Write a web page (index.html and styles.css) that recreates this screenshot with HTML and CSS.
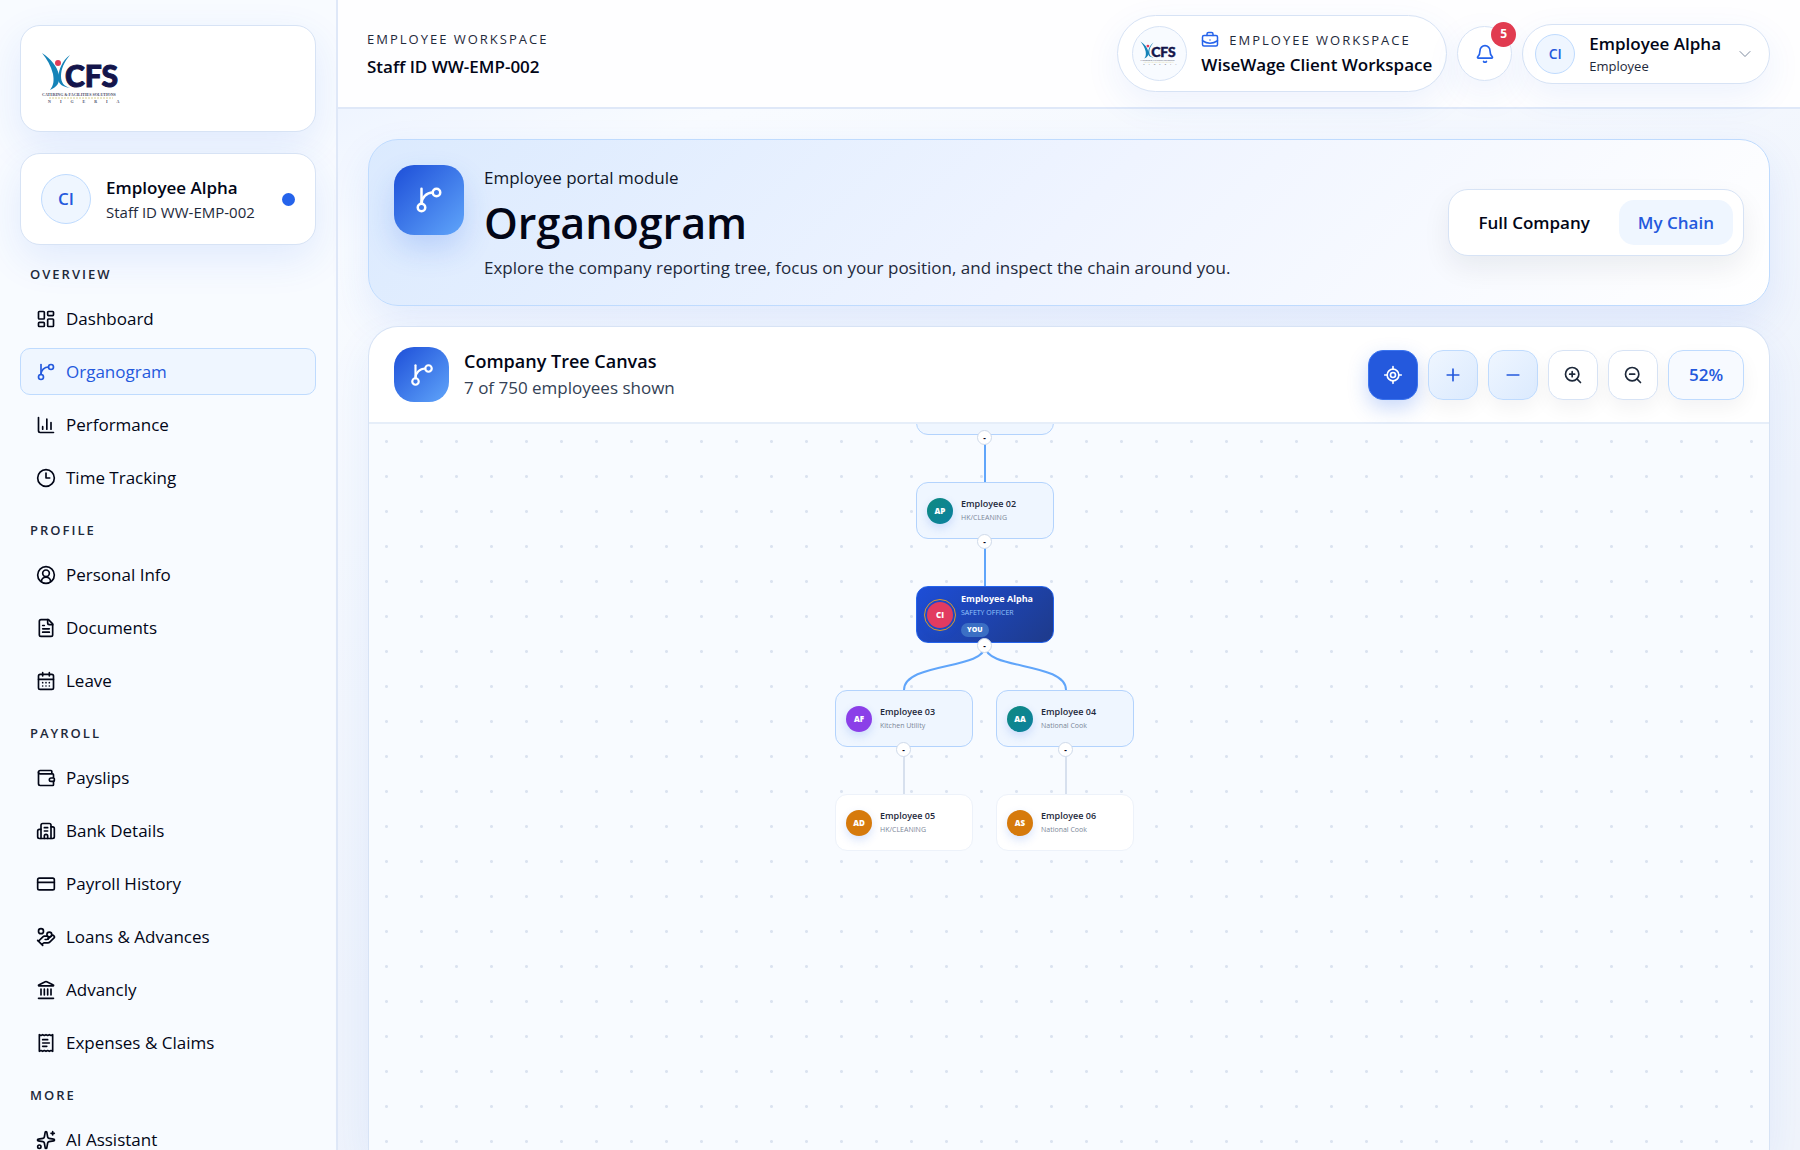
FILE: index.html
```
<!DOCTYPE html>
<html lang="en">
<head>
  <meta charset="UTF-8">
  <meta name="viewport" content="width=device-width, initial-scale=1.0">
  <title>Organogram</title>
  <link rel="stylesheet" href="styles.css">
</head>
<body>
  <svg class="sprite" aria-hidden="true">
    <symbol id="branch" viewBox="0 0 24 24"><path d="M6 3v12"/><circle cx="18" cy="6" r="3"/><circle cx="6" cy="18" r="3"/><path d="M15 6a9 9 0 0 0-9 9"/></symbol>
  </svg>

  <div class="app">
    <aside class="sidebar">
      <a class="brand card" href="#" aria-label="CFS home">
        <svg class="logo" viewBox="0 0 84 54">
          <path class="logo-body" d="M1 1C10 7 16 14 18 23C19 31 16 35 9 38C13 33 13 28 12 22C10 14 6 7 1 1Z"/>
          <path class="logo-body" d="M29 3C23 10 20 17 20 24C20 31 23 34 29 36C22 35 17 32 17 26C18 17 21 9 29 3Z"/>
          <circle class="logo-head" cx="17" cy="11" r="3"/>
          <text class="logo-name" x="24" y="35">CFS</text>
          <text class="logo-line" x="1" y="44">CATERING &amp; FACILITIES SOLUTIONS</text>
          <path class="logo-rule" d="M8 46h64"/>
          <text class="logo-line logo-country" x="7" y="51">N I G E R I A</text>
        </svg>
      </a>

      <div class="profile card">
        <span class="avatar">CI</span>
        <div class="profile-text">
          <strong>Employee Alpha</strong>
          <span>Staff ID WW-EMP-002</span>
        </div>
        <i class="status-dot"></i>
      </div>

      <nav class="nav">
        <h2>Overview</h2>
        <ul>
          <li><a href="#"><svg class="icon" viewBox="0 0 24 24"><rect x="3" y="3" width="7" height="9" rx="1"/><rect x="14" y="3" width="7" height="5" rx="1"/><rect x="14" y="12" width="7" height="9" rx="1"/><rect x="3" y="16" width="7" height="5" rx="1"/></svg>Dashboard</a></li>
          <li><a class="active" href="#" aria-current="page"><svg class="icon"><use href="#branch"/></svg>Organogram</a></li>
          <li><a href="#"><svg class="icon" viewBox="0 0 24 24"><path d="M3 3v16a2 2 0 0 0 2 2h16M8 17v-3M13 17V5M18 17V9"/></svg>Performance</a></li>
          <li><a href="#"><svg class="icon" viewBox="0 0 24 24"><circle cx="12" cy="12" r="10"/><path d="M12 6v6h4.500"/></svg>Time Tracking</a></li>
        </ul>
        <h2>Profile</h2>
        <ul>
          <li><a href="#"><svg class="icon" viewBox="0 0 24 24"><circle cx="12" cy="12" r="10"/><circle cx="12" cy="10" r="4"/><path d="M6.500 20a5.500 5.500 0 0 1 11 0"/></svg>Personal Info</a></li>
          <li><a href="#"><svg class="icon" viewBox="0 0 24 24"><path d="M15 2H6a2 2 0 0 0-2 2v16a2 2 0 0 0 2 2h12a2 2 0 0 0 2-2V7z"/><path d="M14 2v4a2 2 0 0 0 2 2h4M10 9H8M16 13H8M16 17H8"/></svg>Documents</a></li>
          <li><a href="#"><svg class="icon" viewBox="0 0 24 24"><rect x="3" y="4" width="18" height="18" rx="2"/><path d="M8 2v4M16 2v4M3 10h18M8 14h.01M12 14h.01M16 14h.01M8 18h.01M12 18h.01M16 18h.01"/></svg>Leave</a></li>
        </ul>
        <h2>Payroll</h2>
        <ul>
          <li><a href="#"><svg class="icon" viewBox="0 0 24 24"><path d="M19 7V4a1 1 0 0 0-1-1H5a2 2 0 0 0 0 4h15a1 1 0 0 1 1 1v4h-3a2 2 0 0 0 0 4h3a1 1 0 0 0 1-1v-2a1 1 0 0 0-1-1"/><path d="M3 5v14a2 2 0 0 0 2 2h15a1 1 0 0 0 1-1v-4"/></svg>Payslips</a></li>
          <li><a href="#"><svg class="icon" viewBox="0 0 24 24"><path d="M10 12h4M10 8h4M14 21v-3a2 2 0 0 0-4 0v3"/><path d="M6 10H4a2 2 0 0 0-2 2v7a2 2 0 0 0 2 2h16a2 2 0 0 0 2-2V9a2 2 0 0 0-2-2h-2"/><path d="M6 21V5a2 2 0 0 1 2-2h8a2 2 0 0 1 2 2v16"/></svg>Bank Details</a></li>
          <li><a href="#"><svg class="icon" viewBox="0 0 24 24"><rect x="2" y="5" width="20" height="14" rx="2"/><path d="M2 10h20"/></svg>Payroll History</a></li>
          <li><a href="#"><svg class="icon" viewBox="0 0 24 24"><path d="M11 15h2a2 2 0 1 0 0-4h-3c-.6 0-1.100.2-1.400.6L3 17"/><path d="m7 21 1.600-1.400c.3-.4.8-.6 1.400-.6h4c1.100 0 2.100-.4 2.800-1.200l4.600-4.400a2 2 0 0 0-2.750-2.910l-4.200 3.900M2 16l6 6"/><circle cx="16" cy="9" r="2.900"/><circle cx="6" cy="5" r="3"/></svg>Loans &amp; Advances</a></li>
          <li><a href="#"><svg class="icon" viewBox="0 0 24 24"><path d="M10 18v-7M14 18v-7M18 18v-7M6 18v-7M3 22h18"/><path d="M11.100 2.200a2 2 0 0 1 1.800 0l7.900 3.850c.5.230.3.950-.2.950H3.500c-.5 0-.7-.7-.2-.950z"/></svg>Advancly</a></li>
          <li><a href="#"><svg class="icon" viewBox="0 0 24 24"><path d="M4 2v20l2-1 2 1 2-1 2 1 2-1 2 1 2-1 2 1V2l-2 1-2-1-2 1-2-1-2 1-2-1-2 1zM8 8h6M8 12h8M8 16h5"/></svg>Expenses &amp; Claims</a></li>
        </ul>
        <h2>More</h2>
        <ul>
          <li><a href="#"><svg class="icon" viewBox="0 0 24 24"><path d="M11 2.800a1 1 0 0 1 2 0l1 5.600a2 2 0 0 0 1.600 1.600l5.600 1a1 1 0 0 1 0 2l-5.600 1a2 2 0 0 0-1.600 1.600l-1 5.600a1 1 0 0 1-2 0l-1-5.600A2 2 0 0 0 8.400 14l-5.600-1a1 1 0 0 1 0-2l5.600-1A2 2 0 0 0 10 8.400z"/><path d="M20 2v4M22 4h-4"/><circle cx="4" cy="20" r="2"/></svg>AI Assistant</a></li>
        </ul>
      </nav>
    </aside>

    <div class="content">
      <header class="topbar">
        <div class="topbar-title">
          <span class="eyebrow">Employee Workspace</span>
          <strong>Staff ID WW-EMP-002</strong>
        </div>
        <div class="workspace pill">
          <span class="workspace-logo">
            <svg class="logo" viewBox="0 0 84 54">
              <path class="logo-body" d="M1 1C10 7 16 14 18 23C19 31 16 35 9 38C13 33 13 28 12 22C10 14 6 7 1 1Z"/>
              <path class="logo-body" d="M29 3C23 10 20 17 20 24C20 31 23 34 29 36C22 35 17 32 17 26C18 17 21 9 29 3Z"/>
              <circle class="logo-head" cx="17" cy="11" r="3"/>
              <text class="logo-name" x="24" y="35">CFS</text>
              <text class="logo-line" x="1" y="44">CATERING &amp; FACILITIES SOLUTIONS</text>
              <path class="logo-rule" d="M8 46h64"/>
              <text class="logo-line logo-country" x="7" y="51">N I G E R I A</text>
            </svg>
          </span>
          <div class="workspace-text">
            <span class="eyebrow"><svg class="icon" viewBox="0 0 24 24"><path d="M12 12h.01M16 6V4a2 2 0 0 0-2-2h-4a2 2 0 0 0-2 2v2M22 13a18.150 18.150 0 0 1-20 0"/><rect x="2" y="6" width="20" height="14" rx="2"/></svg>Employee Workspace</span>
            <strong>WiseWage Client Workspace</strong>
          </div>
        </div>
        <button class="bell" type="button" aria-label="Notifications">
          <svg class="icon" viewBox="0 0 24 24"><path d="M10.300 21a2 2 0 0 0 3.400 0M3.300 15.300A1 1 0 0 0 4 17h16a1 1 0 0 0 .7-1.700C19.400 14 18 12.500 18 8A6 6 0 0 0 6 8c0 4.500-1.400 6-2.700 7.300"/></svg>
          <span class="badge">5</span>
        </button>
        <button class="user pill" type="button">
          <span class="avatar">CI</span>
          <span class="user-text">
            <strong>Employee Alpha</strong>
            <span>Employee</span>
          </span>
          <svg class="icon" viewBox="0 0 24 24"><path d="m6 9 6 6 6-6"/></svg>
        </button>
      </header>

      <main>
        <section class="hero">
          <span class="tile"><svg class="icon"><use href="#branch"/></svg></span>
          <div class="hero-text">
            <p class="module">Employee portal module</p>
            <h1>Organogram</h1>
            <p>Explore the company reporting tree, focus on your position, and inspect the chain around you.</p>
          </div>
          <div class="switch">
            <button type="button">Full Company</button>
            <button class="on" type="button">My Chain</button>
          </div>
        </section>

        <section class="panel">
          <header class="panel-head">
            <span class="tile"><svg class="icon"><use href="#branch"/></svg></span>
            <div class="panel-title">
              <h2>Company Tree Canvas</h2>
              <p>7 of 750 employees shown</p>
            </div>
            <div class="tools">
              <button class="primary" type="button" aria-label="Center on me"><svg class="icon" viewBox="0 0 24 24"><path d="M2 12h3M19 12h3M12 2v3M12 19v3"/><circle cx="12" cy="12" r="7"/><circle cx="12" cy="12" r="3"/></svg></button>
              <button class="soft" type="button" aria-label="Expand all"><svg class="icon" viewBox="0 0 24 24"><path d="M5 12h14M12 5v14"/></svg></button>
              <button class="soft" type="button" aria-label="Collapse all"><svg class="icon" viewBox="0 0 24 24"><path d="M5 12h14"/></svg></button>
              <button type="button" aria-label="Zoom in"><svg class="icon" viewBox="0 0 24 24"><circle cx="11" cy="11" r="8"/><path d="m21 21-4.300-4.300M11 8v6M8 11h6"/></svg></button>
              <button type="button" aria-label="Zoom out"><svg class="icon" viewBox="0 0 24 24"><circle cx="11" cy="11" r="8"/><path d="m21 21-4.300-4.300M8 11h6"/></svg></button>
              <button class="zoom" type="button">52%</button>
            </div>
          </header>

          <div class="canvas">
            <svg class="links">
              <path d="M616 14v44M616 118v44"/>
              <path d="M616 222C616 246 535 238 535 266M616 222C616 246 697 238 697 266"/>
              <path class="idle" d="M535 326v44M697 326v44"/>
            </svg>
            <div class="node chain n1"></div>
            <div class="node chain n2"><span class="face teal">AP</span><div><b>Employee 02</b><small>HK/CLEANING</small></div></div>
            <div class="node me n3"><span class="face rose">CI</span><div><b>Employee Alpha</b><small>SAFETY OFFICER</small><em>YOU</em></div></div>
            <div class="node chain n4"><span class="face violet">AF</span><div><b>Employee 03</b><small>Kitchen Utility</small></div></div>
            <div class="node chain n5"><span class="face teal">AA</span><div><b>Employee 04</b><small>National Cook</small></div></div>
            <div class="node n6"><span class="face amber">AD</span><div><b>Employee 05</b><small>HK/CLEANING</small></div></div>
            <div class="node n7"><span class="face amber">AS</span><div><b>Employee 06</b><small>National Cook</small></div></div>
            <button class="fold f1" type="button">-</button>
            <button class="fold f2" type="button">-</button>
            <button class="fold f3" type="button">-</button>
            <button class="fold f4" type="button">-</button>
            <button class="fold f5" type="button">-</button>
          </div>
        </section>
      </main>
    </div>
  </div>
</body>
</html>
```
FILE: styles.css
```
* { box-sizing: border-box; }
body { margin: 0; font-family: "Segoe UI", "Open Sans", "Noto Sans", sans-serif; font-size: 17px; line-height: 24px; color: #020617; background: #f8fbff; }
h1, h2, p, ul { margin: 0; padding: 0; }
ul { list-style: none; }
a { color: inherit; text-decoration: none; }
button { font: inherit; color: inherit; cursor: pointer; padding: 0; }
strong { font-weight: 600; }
.sprite { position: absolute; width: 0; height: 0; }
.icon { width: 20px; height: 20px; flex: none; fill: none; stroke: currentColor; stroke-width: 2; stroke-linecap: round; stroke-linejoin: round; }

.app { display: flex; height: 100vh; overflow: hidden; }

/* sidebar */
.sidebar { width: 338px; flex: none; padding: 25px 20px 0; border-right: 2px solid #dfe8f8; background: #f8fbff; overflow: hidden; }
.card { display: flex; align-items: center; border: 1px solid #d7e3f5; border-radius: 20px; background: #fff; box-shadow: 0 14px 40px rgba(37, 99, 235, .11); }
.brand { height: 107px; padding: 0 20px; }
.logo { width: 84px; height: 54px; overflow: visible; }
.logo-body { fill: #1583b8; }
.logo-head { fill: #e23b57; }
.logo-name { font: 900 30px Lato, sans-serif; fill: #14154b; stroke: #14154b; stroke-width: 1; }
.logo-line { font: 700 4px "Liberation Serif", serif; fill: #4a4d68; }
.logo-rule { stroke: #d8cf8a; stroke-width: 1; stroke-dasharray: 2 1; }
.logo-country { word-spacing: 8px; }

.avatar { display: flex; align-items: center; justify-content: center; flex: none; width: 50px; height: 50px; border: 1px solid #bfdbfe; border-radius: 50%; background: #eff6ff; color: #2459dd; font-weight: 600; }
.profile { gap: 15px; height: 92px; margin-top: 21px; padding: 0 20px; }
.profile-text { display: flex; flex-direction: column; flex: 1; padding-top: 2px; }
.profile-text span { font-size: 15px; color: #1e293b; }
.status-dot { width: 13px; height: 13px; border-radius: 50%; background: #2563eb; }

.nav h2 { margin: 19px 0 11px 10px; font-size: 13px; line-height: 20px; font-weight: 600; letter-spacing: 2px; text-transform: uppercase; color: #1e293b; }
.nav ul { display: grid; gap: 6px; }
.nav a { display: flex; align-items: center; gap: 10px; height: 47px; padding: 0 15px; border: 1px solid transparent; border-radius: 10px; }
.nav a.active { border-color: #bfdbfe; background: #eff6ff; color: #2459dd; }

/* top bar */
.content { display: flex; flex-direction: column; flex: 1; min-width: 0; background: linear-gradient(160deg, #e8f0ff, #f8fbff 15%, #eef3fc 60%, #f0f4fb); }
.topbar { display: flex; align-items: center; gap: 10px; height: 109px; flex: none; padding: 0 30px 0 29px; border-bottom: 2px solid #dfe8f8; background: #fefeff; }
.topbar-title { display: flex; flex-direction: column; gap: 4px; margin-right: auto; padding-bottom: 2px; }
.eyebrow { display: flex; align-items: center; gap: 10px; font-size: 13px; font-weight: 500; letter-spacing: 2px; text-transform: uppercase; color: #1e293b; }
.eyebrow .icon { width: 18px; height: 18px; color: #2563eb; }
.pill { display: flex; align-items: center; border: 1px solid #d7e3f5; border-radius: 40px; background: #fff; box-shadow: 0 12px 36px rgba(37, 99, 235, .08); text-align: left; }
.workspace { gap: 14px; height: 77px; padding: 0 14px; }
.workspace-logo { display: flex; align-items: center; justify-content: center; width: 55px; height: 55px; border: 1px solid #d7e3f5; border-radius: 50%; background: #f8fbff; }
.workspace-logo .logo { width: 39px; height: 25px; }
.workspace-text { display: flex; flex-direction: column; gap: 1px; padding-bottom: 2px; }
.bell { position: relative; display: flex; align-items: center; justify-content: center; width: 55px; height: 55px; border: 1px solid #d7e3f5; border-radius: 50%; background: #fff; color: #2563eb; box-shadow: 0 12px 36px rgba(37, 99, 235, .08); }
.badge { position: absolute; top: -5px; right: -5px; width: 25px; height: 25px; border-radius: 50%; background: #e13b50; color: #fff; font-size: 12px; line-height: 24px; font-weight: 700; }
.user { gap: 14px; height: 60px; padding: 0 14px 0 12px; }
.user .avatar { width: 40px; height: 40px; font-size: 14px; }
.user-text { display: flex; flex-direction: column; }
.user-text span { font-size: 13px; line-height: 20px; color: #1e293b; }
.user > .icon { color: #64748b; stroke-width: 1; }

/* page */
main { display: flex; flex-direction: column; gap: 20px; flex: 1; min-height: 0; padding: 30px 30px 0; }
.tile { display: flex; align-items: center; justify-content: center; flex: none; border-radius: 20px; background: linear-gradient(135deg, #1d4ed8, #60a5fa); color: #fff; box-shadow: 0 14px 30px rgba(37, 99, 235, .2); }
.hero { display: flex; align-items: center; gap: 20px; min-height: 167px; flex: none; padding: 25px; border: 1px solid #bfdbfe; border-radius: 30px; background: linear-gradient(135deg, #dbeafe, #eff4ff 50%, #fff); box-shadow: 0 16px 40px rgba(37, 99, 235, .1); }
.hero .tile { width: 70px; height: 70px; align-self: flex-start; }
.hero .tile .icon { width: 30px; height: 30px; }
.hero-text { flex: 1; }
.hero h1 { font-size: 43px; line-height: 66px; font-weight: 600; }
.hero p { color: #1e293b; }
.hero .module { font-weight: 500; color: #0f172a; }
.switch { display: flex; gap: 10px; padding: 10px; border: 1px solid #d7e3f5; border-radius: 20px; background: #fff; box-shadow: 0 12px 28px rgba(15, 23, 42, .07); }
.switch button { height: 45px; padding: 0 19px; border: 0; border-radius: 15px; background: none; font-weight: 600; }
.switch .on { background: #eff6ff; color: #2459dd; }

.panel { display: flex; flex-direction: column; flex: 1; min-height: 0; border: 1px solid #d7e3f5; border-bottom: 0; border-radius: 30px 30px 0 0; background: #fff; overflow: hidden; box-shadow: 0 16px 40px rgba(37, 99, 235, .08); }
.panel-head { display: flex; align-items: center; gap: 15px; height: 97px; flex: none; padding: 0 25px; border-bottom: 2px solid #e6eef9; }
.panel-head .tile { width: 55px; height: 55px; box-shadow: none; }
.panel-head .tile .icon { width: 26px; height: 26px; }
.panel-title { flex: 1; }
.panel-title h2 { font-size: 18px; line-height: 27px; font-weight: 600; }
.panel-title p { line-height: 26px; color: #334155; }
.tools { display: flex; gap: 10px; }
.tools button { display: flex; align-items: center; justify-content: center; width: 50px; height: 50px; border: 1px solid #d7e3f5; border-radius: 15px; background: #fff; color: #1e293b; box-shadow: 0 8px 20px rgba(15, 23, 42, .05); }
.tools .primary { border-color: #3b74ee; background: #2459dd; color: #fff; box-shadow: 0 8px 20px rgba(37, 99, 235, .25); }
.tools .soft { border-color: #bfdbfe; background: linear-gradient(135deg, #eff6ff, #dbeafe); color: #2459dd; }
.tools .zoom { width: 76px; border-color: #bfdbfe; background: #f7faff; color: #2459dd; font-weight: 600; }

/* tree: positions are canvas coordinates */
.canvas { position: relative; flex: 1; overflow: hidden; background: radial-gradient(circle, #dbe3f0 1px, transparent 2px) 0 0 / 35px 35px #f8fbff; }
.links { position: absolute; width: 100%; height: 100%; fill: none; stroke: #60a5fa; stroke-width: 2; }
.links .idle { stroke: #d7e0ee; }
.node { position: absolute; display: flex; align-items: center; gap: 8px; width: 138px; height: 57px; padding: 0 10px; border: 1px solid #edf2fa; border-radius: 12px; background: #fff; }
.node div { display: flex; flex-direction: column; align-items: flex-start; }
.node b { font-size: 9px; line-height: 14px; font-weight: 600; color: #1e293b; }
.node small { font-size: 7px; line-height: 14px; color: #7b8698; }
.chain { border-color: #b3d3fd; background: #eff6ff; }
.me { border-color: #2563eb; background: linear-gradient(135deg, #1d4ed8, #1e3a8a); }
.me b { color: #fff; font-weight: 700; }
.me small { color: #93c5fd; }
.me em { margin-top: 3px; padding: 0 6px; border-radius: 8px; background: #3b6fc4; color: #fff; font-size: 7px; line-height: 14px; font-style: normal; font-weight: 800; }
.face { display: flex; align-items: center; justify-content: center; flex: none; width: 26px; height: 26px; border-radius: 50%; color: #fff; font-size: 8px; font-weight: 800; box-shadow: 0 4px 10px rgba(37, 99, 235, .18); }
.teal { background: linear-gradient(135deg, #0f8a80, #0c80a0); }
.rose { background: #e23b60; outline: 1px solid #d99a2b; outline-offset: 2px; }
.violet { background: #8b3fe8; }
.amber { background: #d67a0c; }
.n1 { left: 547px; top: -46px; }
.n2 { left: 547px; top: 58px; }
.n3 { left: 547px; top: 162px; }
.n4 { left: 466px; top: 266px; }
.n5 { left: 627px; top: 266px; }
.n6 { left: 466px; top: 370px; }
.n7 { left: 627px; top: 370px; }
.fold { position: absolute; width: 15px; height: 15px; border: 1px solid #cfdaea; border-radius: 50%; background: #fff; font-size: 8px; line-height: 11px; font-weight: 700; }
.f1 { left: 608px; top: 6px; }
.f2 { left: 608px; top: 110px; }
.f3 { left: 608px; top: 214px; }
.f4 { left: 527px; top: 318px; }
.f5 { left: 689px; top: 318px; }
```
